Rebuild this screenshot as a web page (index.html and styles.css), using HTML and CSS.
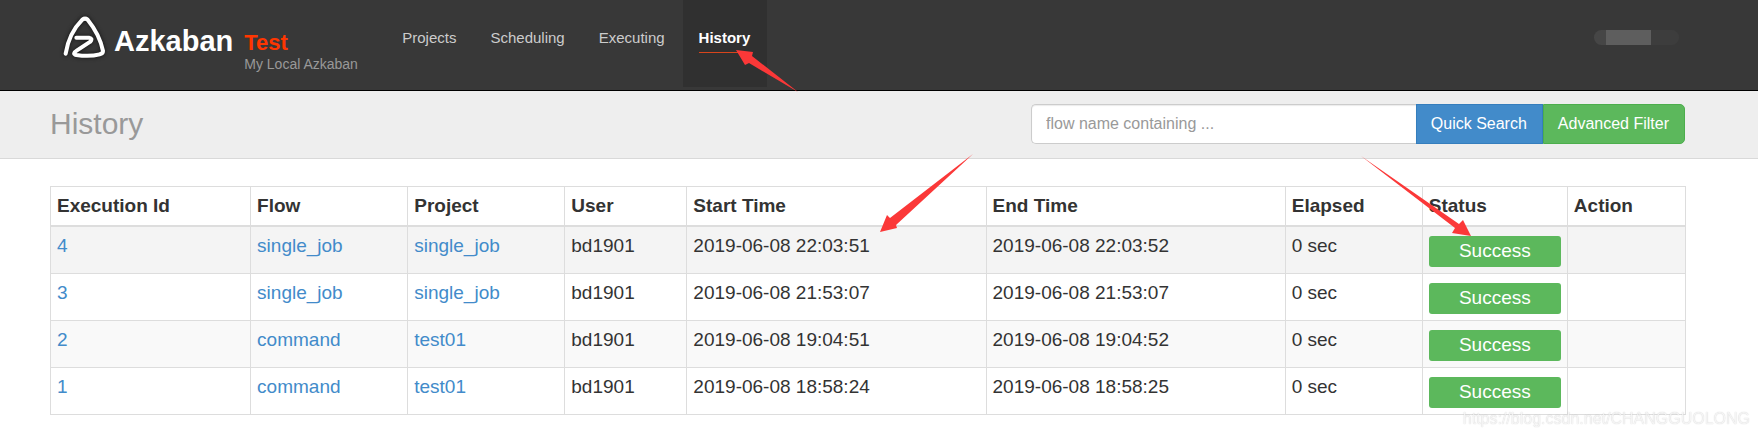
FILE: index.html
```html
<!DOCTYPE html>
<html lang="en">
<head>
    <meta charset="UTF-8" />
    <meta name="viewport" content="width=device-width, initial-scale=1" />
    <title>Azkaban - History</title>
    <link rel="stylesheet" href="styles.css">
</head>

<body>
    <header class="navbar">
        <a class="brand" href="#">
            <svg class="brand-logo" viewBox="18 33 144 132" aria-hidden="true">
                <path d="M32 146 C38 108 54 72 82 44 Q90 38 98 44 C124 76 138 108 144 138 Q144 146 134 148 Q104 156 64 150 Q50 146 66 136 L106 110 Q114 100 102 98 L64 98" />
            </svg>
            <span class="brand-name">Azkaban</span>
        </a>
        <div class="brand-info">
            <span class="brand-env">Test</span>
            <span class="brand-label">My Local Azkaban</span>
        </div>

        <nav>
            <ul class="nav">
                <li><a href="#">Projects</a></li>
                <li><a href="#">Scheduling</a></li>
                <li><a href="#">Executing</a></li>
                <li class="active">
                    <a href="#">History</a>
                    <svg class="arrow arrow-nav" viewBox="0 0 64 44" aria-hidden="true">
                        <path d="M1 1 L18 3 L17 7 L63 43 L14 14 L10 16 Z" />
                    </svg>
                </li>
            </ul>
        </nav>

        <div class="user" aria-hidden="true"></div>
    </header>

    <section class="page-header">
        <h1>History</h1>
        <form class="search">
            <input type="text" id="searchInput" placeholder="flow name containing ..." aria-label="Flow name" autocomplete="off" />
            <button type="button" class="btn-primary">Quick Search</button>
            <button type="button" class="btn-success">Advanced Filter</button>
        </form>
    </section>

    <main class="container">
        <table class="history">
            <colgroup>
                <col class="col-id">
                <col class="col-name">
                <col class="col-name">
                <col class="col-user">
                <col class="col-time">
                <col class="col-time">
                <col class="col-elapsed">
                <col class="col-status">
                <col class="col-action">
            </colgroup>
            <thead>
                <tr>
                    <th>Execution Id</th>
                    <th>Flow</th>
                    <th>Project</th>
                    <th>User</th>
                    <th>Start Time
                        <svg class="arrow arrow-start" viewBox="0 0 96 80" aria-hidden="true">
                            <path d="M1 79 L8 62 L11 65 L94 1 L17 72 L18 75 Z" />
                        </svg>
                    </th>
                    <th>End Time</th>
                    <th>Elapsed</th>
                    <th>Status
                        <svg class="arrow arrow-status" viewBox="0 0 112 82" aria-hidden="true">
                            <path d="M1 1 L99 69 L103 65 L111 81 L92 78 L95 73 Z" />
                        </svg>
                    </th>
                    <th>Action</th>
                </tr>
            </thead>
            <tbody>
                <tr class="hover">
                    <td><a href="#">4</a></td>
                    <td><a href="#">single_job</a></td>
                    <td><a href="#">single_job</a></td>
                    <td>bd1901</td>
                    <td>2019-06-08 22:03:51</td>
                    <td>2019-06-08 22:03:52</td>
                    <td>0 sec</td>
                    <td><div class="status">Success</div></td>
                    <td></td>
                </tr>
                <tr>
                    <td><a href="#">3</a></td>
                    <td><a href="#">single_job</a></td>
                    <td><a href="#">single_job</a></td>
                    <td>bd1901</td>
                    <td>2019-06-08 21:53:07</td>
                    <td>2019-06-08 21:53:07</td>
                    <td>0 sec</td>
                    <td><div class="status">Success</div></td>
                    <td></td>
                </tr>
                <tr>
                    <td><a href="#">2</a></td>
                    <td><a href="#">command</a></td>
                    <td><a href="#">test01</a></td>
                    <td>bd1901</td>
                    <td>2019-06-08 19:04:51</td>
                    <td>2019-06-08 19:04:52</td>
                    <td>0 sec</td>
                    <td><div class="status">Success</div></td>
                    <td></td>
                </tr>
                <tr>
                    <td><a href="#">1</a></td>
                    <td><a href="#">command</a></td>
                    <td><a href="#">test01</a></td>
                    <td>bd1901</td>
                    <td>2019-06-08 18:58:24</td>
                    <td>2019-06-08 18:58:25</td>
                    <td>0 sec</td>
                    <td><div class="status">Success</div></td>
                    <td></td>
                </tr>
            </tbody>
        </table>
    </main>

    <div class="watermark">https://blog.csdn.net/CHANGGUOLONG</div>
</body>

</html>
```
FILE: styles.css
```css
* {
    box-sizing: border-box;
}

body {
    margin: 0;
    font-family: "Liberation Sans", Arial, sans-serif;
    font-size: 19px;
    line-height: 26px;
    color: #333;
    background: #fff;
}

a {
    color: #428bca;
    text-decoration: none;
}

/* top bar */
.navbar {
    display: flex;
    align-items: flex-start;
    height: 91px;
    padding: 0 72px 0 61px;
    background: #383838;
    border-bottom: 1px solid #000;
}

.brand {
    display: flex;
    padding-top: 16px;
}

.brand-logo {
    width: 48px;
    height: 44px;
    margin-right: 5px;
    fill: none;
    stroke: #fff;
    stroke-width: 12;
    stroke-linecap: round;
    stroke-linejoin: round;
    filter: drop-shadow(0 0 2px #111);
}

.brand-name {
    color: #fff;
    font-size: 29px;
    font-weight: 700;
    line-height: 50px;
}

.brand-info {
    display: flex;
    flex-direction: column;
    width: 142px;
    margin-left: 11px;
    padding-top: 30px;
}

.brand-env {
    color: #ff3601;
    font-size: 22px;
    font-weight: 700;
    line-height: 26px;
}

.brand-label {
    color: #999;
    font-size: 14px;
    line-height: 16px;
}

.nav {
    display: flex;
    gap: 1px;
    margin: 0;
    padding: 0;
    list-style: none;
}

.nav li {
    position: relative;
    height: 87px;
    padding: 24px 17px 0 16px;
}

.nav a {
    display: block;
    height: 29px;
    color: #ccc;
    font-size: 15px;
    line-height: 27px;
}

.nav .active {
    background: #303030;
}

.nav .active a {
    color: #fff;
    font-weight: 700;
    border-bottom: 1px solid #d8451c;
}

/* hidden user name */
.user {
    width: 85px;
    height: 15px;
    margin: 30px 7px 0 auto;
    border-radius: 8px;
    background: linear-gradient(90deg, #464646 12px, #5e5e5e 12px 57px, #3d3d3d 57px);
}

/* title and search */
.page-header {
    display: flex;
    align-items: center;
    justify-content: space-between;
    height: 68px;
    padding: 0 73px 2px 50px;
    background: #eee;
    border-bottom: 1px solid #d9d9d9;
}

.page-header h1 {
    margin: 0;
    color: #999;
    font-size: 30px;
    font-weight: 400;
}

.search {
    display: flex;
    width: 40%;
}

.search input,
.search button {
    height: 40px;
    padding: 0 14px;
    border: 1px solid #ccc;
    font-family: inherit;
    font-size: 16px;
}

.search input {
    flex: 1;
    min-width: 0;
    border-right: 0;
    border-radius: 5px 0 0 5px;
    box-shadow: inset 0 1px 1px rgba(0, 0, 0, 0.08);
}

.search input::placeholder {
    color: #999;
}

.search button {
    padding: 0 15px 0 14px;
    color: #fff;
    white-space: nowrap;
    cursor: pointer;
}

.search .btn-primary {
    background: #428bca;
    border-color: #357ebd;
}

.search .btn-success {
    background: #5cb85c;
    border-color: #4cae4c;
    border-radius: 0 5px 5px 0;
}

/* executions */
.container {
    padding: 27px 72px 22px 50px;
}

.history {
    width: 100%;
    table-layout: fixed;
    border-collapse: collapse;
}

.history th,
.history td {
    padding: 6px;
    border: 1px solid #ddd;
    text-align: left;
    vertical-align: top;
}

.history th {
    position: relative;
    border-bottom-width: 2px;
}

.history tbody tr:nth-child(odd) {
    background: #f9f9f9;
}

.history tbody tr.hover {
    background: #f4f4f4;
}

.col-id {
    width: 200px;
}

.col-name {
    width: 157px;
}

.col-user {
    width: 122px;
}

.col-time {
    width: 299px;
}

.col-elapsed {
    width: 137px;
}

.col-status {
    width: 145px;
}

.col-action {
    width: 118px;
}

.status {
    height: 31px;
    margin-top: 3px;
    color: #fff;
    line-height: 30px;
    text-align: center;
    background: #5cb85c;
    border-radius: 3px;
}

/* pointers drawn over the page */
.arrow {
    position: absolute;
    z-index: 2;
    fill: #fb3838;
    pointer-events: none;
}

.arrow-nav {
    width: 64px;
    height: 44px;
    left: 52px;
    top: 49px;
}

.arrow-start {
    width: 96px;
    height: 80px;
    left: 192px;
    top: -34px;
}

.arrow-status {
    width: 112px;
    height: 82px;
    left: -63px;
    top: -32px;
}

.watermark {
    position: fixed;
    right: 8px;
    bottom: 5px;
    color: rgba(255, 255, 255, 0.8);
    font-size: 16px;
    text-shadow: 0 0 1px rgba(0, 0, 0, 0.25);
}
```
